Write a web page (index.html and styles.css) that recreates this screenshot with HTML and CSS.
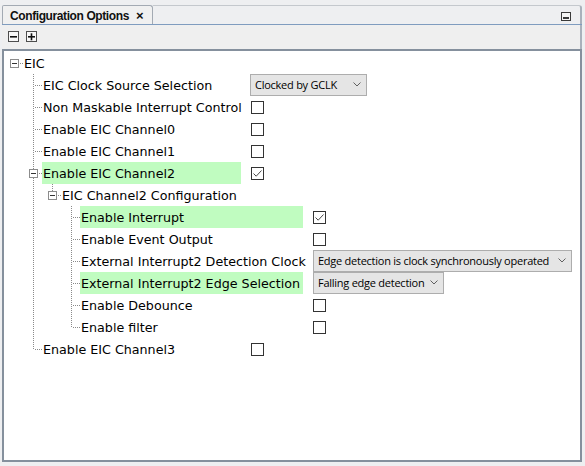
FILE: index.html
```html
<!DOCTYPE html>
<html>
<head>
<meta charset="utf-8">
<link rel="stylesheet" href="styles.css">
</head>
<body>
<div class="panel">
  <div class="tabbar">
    <div class="tab"><span class="tab-title">Configuration Options</span><span class="tab-close">×</span></div>
    <div class="tab-fill">
      <svg class="minimize" width="10" height="9" viewBox="0 0 10 9"><rect x="0.5" y="0.5" width="9" height="8" fill="#f4f4f4" stroke="#3a3a3a"/><rect x="2" y="5" width="6" height="2" fill="#3a3a3a"/></svg>
    </div>
  </div>
  <div class="toolbar">
    <svg class="tbtn" width="11" height="11" viewBox="0 0 11 11"><rect x="0.5" y="0.5" width="10" height="10" fill="#f7f7f7" stroke="#4d4d4d"/><rect x="2" y="5" width="7" height="1.6" fill="#111"/></svg>
    <svg class="tbtn" width="11" height="11" viewBox="0 0 11 11"><rect x="0.5" y="0.5" width="10" height="10" fill="#f7f7f7" stroke="#4d4d4d"/><rect x="2" y="5" width="7" height="1.6" fill="#111"/><rect x="4.7" y="2.3" width="1.6" height="7" fill="#111"/></svg>
  </div>
  <div class="content">
    <div class="row">
      <span class="node root"><span class="box"></span></span>
      <span class="label">EIC</span>
    </div>
    <div class="row">
      <span class="ind"></span><span class="node tee"></span>
      <span class="label l1">EIC Clock Source Selection</span>
      <div class="select w117"><span>Clocked by GCLK</span><svg width="8" height="5" viewBox="0 0 8 5"><path d="M0.5 0.5 L4 4 L7.5 0.5" fill="none" stroke="#606060"/></svg></div>
    </div>
    <div class="row">
      <span class="ind"></span><span class="node tee"></span>
      <span class="label l1">Non Maskable Interrupt Control</span>
      <span class="cb c1"></span>
    </div>
    <div class="row">
      <span class="ind"></span><span class="node tee"></span>
      <span class="label l1">Enable EIC Channel0</span>
      <span class="cb c1"></span>
    </div>
    <div class="row">
      <span class="ind"></span><span class="node tee"></span>
      <span class="label l1">Enable EIC Channel1</span>
      <span class="cb c1"></span>
    </div>
    <div class="row">
      <span class="ind"></span><span class="node tee"><span class="box"></span></span>
      <span class="label l1 hl">Enable EIC Channel2</span>
      <span class="cb c1 checked"><svg width="11" height="11" viewBox="0 0 11 11"><path d="M1.5 5.5 L4.2 8.2 L9.5 2.5" fill="none" stroke="#4a4a4a" stroke-width="1"/></svg></span>
    </div>
    <div class="row">
      <span class="ind"></span><span class="ind line"></span><span class="node ell"><span class="box"></span></span>
      <span class="label">EIC Channel2 Configuration</span>
    </div>
    <div class="row">
      <span class="ind"></span><span class="ind line"></span><span class="ind"></span><span class="node tee"></span>
      <span class="label l3 hl">Enable Interrupt</span>
      <span class="cb c3 checked"><svg width="11" height="11" viewBox="0 0 11 11"><path d="M1.5 5.5 L4.2 8.2 L9.5 2.5" fill="none" stroke="#4a4a4a" stroke-width="1"/></svg></span>
    </div>
    <div class="row">
      <span class="ind"></span><span class="ind line"></span><span class="ind"></span><span class="node tee"></span>
      <span class="label l3">Enable Event Output</span>
      <span class="cb c3"></span>
    </div>
    <div class="row">
      <span class="ind"></span><span class="ind line"></span><span class="ind"></span><span class="node tee"></span>
      <span class="label l3">External Interrupt2 Detection Clock</span>
      <div class="select w259"><span>Edge detection is clock synchronously operated</span><svg width="8" height="5" viewBox="0 0 8 5"><path d="M0.5 0.5 L4 4 L7.5 0.5" fill="none" stroke="#606060"/></svg></div>
    </div>
    <div class="row">
      <span class="ind"></span><span class="ind line"></span><span class="ind"></span><span class="node tee"></span>
      <span class="label l3 hl">External Interrupt2 Edge Selection</span>
      <div class="select w131"><span>Falling edge detection</span><svg width="8" height="5" viewBox="0 0 8 5"><path d="M0.5 0.5 L4 4 L7.5 0.5" fill="none" stroke="#606060"/></svg></div>
    </div>
    <div class="row">
      <span class="ind"></span><span class="ind line"></span><span class="ind"></span><span class="node tee"></span>
      <span class="label l3">Enable Debounce</span>
      <span class="cb c3"></span>
    </div>
    <div class="row">
      <span class="ind"></span><span class="ind line"></span><span class="ind"></span><span class="node ell"></span>
      <span class="label l3">Enable filter</span>
      <span class="cb c3"></span>
    </div>
    <div class="row">
      <span class="ind"></span><span class="node ell"></span>
      <span class="label l1">Enable EIC Channel3</span>
      <span class="cb c1"></span>
    </div>
  </div>
</div>
</body>
</html>
```
FILE: styles.css
```css
* { box-sizing: border-box; }
html, body { margin: 0; padding: 0; }
body {
  width: 585px;
  height: 466px;
  background: #eeeff1;
  font-family: "DejaVu Sans", Verdana, sans-serif;
  overflow: hidden;
}
.panel {
  height: 466px;
  padding: 5px 3px 4px 2px;
  display: flex;
  flex-direction: column;
}
.tabbar {
  height: 20px;
  display: flex;
  border-bottom: 1px solid #7f9cbf;
}
.tab {
  width: 151px;
  border: 1px solid #a3aab3;
  border-bottom: none;
  border-radius: 2px 3px 0 0;
  background: #f0f0f0;
  display: flex;
  align-items: center;
  padding: 1px 0 0 7px;
  font-family: "Liberation Sans", Arial, sans-serif;
  font-weight: bold;
  font-size: 12px;
  color: #111;
  white-space: nowrap;
}
.tab-title { letter-spacing: -0.4px; }
.tab-close { margin-left: 7px; font-size: 13px; }
.tab-fill {
  flex: 1;
  border-top: 1px solid #c4c8cd;
  border-right: 2px solid #a9b1bb;
  border-radius: 0 3px 0 0;
  display: flex;
  justify-content: flex-end;
  align-items: flex-start;
  padding: 6px 9px 0 0;
}
.toolbar {
  height: 24px;
  display: flex;
  align-items: center;
  gap: 7px;
  padding: 0 0 1px 6px;
  border-right: 2px solid #a9b1bb;
  background: #efefef;
}
.content {
  flex: 1;
  background: #fff;
  border: 2px solid #85909d;
  padding-top: 1px;
}
.row {
  height: 22px;
  display: flex;
  align-items: center;
  font-size: 12.7px;
  color: #000;
}
.ind, .node {
  width: 19px;
  height: 22px;
  flex: none;
}
.ind.line {
  background-image: repeating-linear-gradient(to bottom, #8a8a8a 0 1px, transparent 1px 2px);
  background-repeat: no-repeat;
  background-position: 10px 0;
  background-size: 1px 22px;
}
.node.tee, .node.ell, .node.root {
  background-image:
    repeating-linear-gradient(to right, #8a8a8a 0 1px, transparent 1px 2px),
    repeating-linear-gradient(to bottom, #8a8a8a 0 1px, transparent 1px 2px);
  background-repeat: no-repeat;
  background-position: 12px 11px, 10px 0;
  background-size: 7px 1px, 1px 22px;
}
.node.ell { background-size: 7px 1px, 1px 12px; }
.node.root { background-size: 7px 1px, 0 0; }
.node { display: flex; align-items: center; }
.box {
  width: 9px;
  height: 9px;
  margin-left: 6px;
  border: 1px solid #8c8c8c;
  background: #fff;
  display: flex;
  align-items: center;
  justify-content: center;
}
.box::after {
  content: "";
  width: 5px;
  height: 1px;
  background: #333;
}
.label {
  height: 22px;
  line-height: 23px;
  padding-left: 1px;
  white-space: nowrap;
  flex: none;
}
.label.l1 { width: 199px; margin-right: 9px; }
.label.l3 { width: 223px; margin-right: 10px; }
.hl { background: #c0fcc0; }
.cb {
  width: 13px;
  height: 13px;
  border: 1px solid #333;
  background: #fff;
  display: flex;
  align-items: center;
  justify-content: center;
  flex: none;
}
.cb.c1 { margin-left: 1px; }
.select {
  height: 22px;
  background: #e5e5e5;
  border: 1px solid #adadad;
  display: flex;
  align-items: center;
  justify-content: space-between;
  padding: 0 5px 1px 4px;
  font-family: "Open Sans", "Noto Sans", sans-serif;
  font-size: 11px;
  letter-spacing: -0.25px;
  color: #000;
  flex: none;
  white-space: nowrap;
}
.w117 { width: 117px; }
.w259 { width: 259px; }
.w131 { width: 131px; }
```
